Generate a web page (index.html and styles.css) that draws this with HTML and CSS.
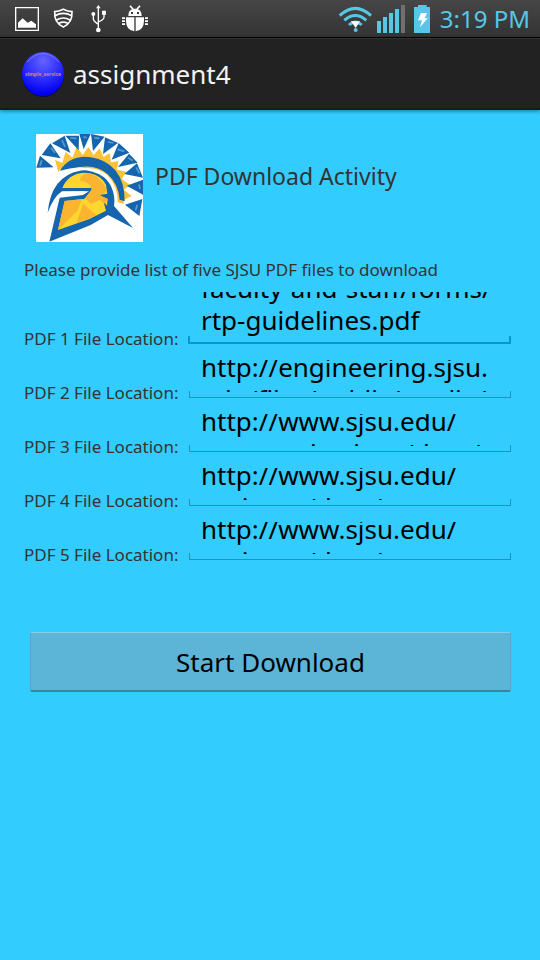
FILE: index.html
```html
<!DOCTYPE html>
<html lang="en">
<head>
<meta charset="utf-8">
<meta name="viewport" content="width=device-width, initial-scale=1">
<title>assignment4</title>
<link rel="stylesheet" href="styles.css">
</head>
<body>
<div class="status">
  <svg class="notices" viewBox="0 0 480 120" aria-hidden="true">
    <path fill="none" stroke="#fff" stroke-width="4" d="M47 23h68v68H47z"/>
    <path fill="#fff" d="M54 83V68l14-13 15 13 11-6 14 11v10z"/>
    <path fill="none" stroke="#fff" stroke-width="5" d="M164 35q12 0 26-7 14 7 26 7 2 34-26 46-28-12-26-46zM165 47q25-14 50 0M170 60q20-12 40 0M177 70q13-7 26 0"/>
    <path fill="none" stroke="#fff" stroke-width="4" d="M295 22v66M280 44v12q0 7 15 17M312 37v15q0 7-17 14"/>
    <path fill="#fff" d="M288 25l7-10 7 10zM306 32h12v12h-12z"/>
    <circle fill="#fff" cx="280" cy="42" r="6"/><circle fill="#fff" cx="295" cy="90" r="7"/>
    <path fill="#fff" d="M385 48q0-16 11-20l-8-9 4-3 9 10h8l9-10 4 3-8 9q11 4 11 20zM378 52h25v42q-25-4-25-32zM407 52h25v10q0 28-25 32zM366 52h9v5h-9zM366 61h9v5h-9zM366 70h9v5h-9zM435 52h9v5h-9zM435 61h9v5h-9zM435 70h9v5h-9z"/>
    <path fill="#3b3b3b" d="M393 36h6v6h-6zM411 36h6v6h-6z"/>
  </svg>
  <svg class="signals" viewBox="0 0 300 120" aria-hidden="true">
    <g fill="none" stroke="#56c8e6" stroke-width="9">
      <path d="M29 47Q76 3 123 47M43 61q33-29 66 0M57 75q19-18 38 0"/>
    </g>
    <circle fill="#56c8e6" cx="77" cy="90" r="6"/>
    <path fill="#fff" d="M63 64h27L77 84z"/>
    <path fill="#56c8e6" d="M141 63h12v36h-12zM159 51h12v48h-12zM177 39h12v60h-12zM195 27h12v72h-12z"/>
    <path fill="#707070" d="M213 15h12v84h-12z"/>
    <path fill="#56c8e6" d="M252 21h12v-6h26v6h13v78h-51z"/>
    <path fill="#fff" d="M273 39h18l-7 16h9l-23 27 6-21h-12z"/>
  </svg>
  <time class="clock">3:19 PM</time>
</div>
<header class="bar">
  <svg class="launcher" viewBox="0 0 44 48" aria-hidden="true">
    <defs><radialGradient id="orb" cx=".5" cy=".2" r=".75"><stop offset="0" stop-color="#6464ff"/><stop offset=".5" stop-color="#3434ff"/><stop offset="1" stop-color="#0000f0"/></radialGradient></defs>
    <ellipse cx="22" cy="25" rx="21" ry="22" fill="#080850"/>
    <ellipse cx="22" cy="24" rx="21" ry="22" fill="url(#orb)"/>
    <path d="M6 12Q22-5 38 12" fill="none" stroke="#7777f0"/>
    <text x="22" y="26" text-anchor="middle" class="orb-text">simple_service</text>
  </svg>
  <h1 class="app-name">assignment4</h1>
</header>
<main class="content">
  <div class="intro">
    <svg class="logo" viewBox="33 27 321 324" role="img" aria-label="Spartan helmet">
      <path fill="#fff" d="M33 27h321v324H33z"/>
      <path fill="#fcc23a" d="M100 142l-10-37 22 8 10-33 20 18 13-32 18 24 17-24 16 24 18-20 12 26 18-12 4 28 22-4-4 26 28 6-14 22 26 18-20 14 24 19-24 12v12l-30-10-16-50-40-40-60-14-46 12z"/>
      <g fill="#1465ad">
        <path d="M34 128l11-36 41 35zM50 90l26-35 31 45zM81 55l38-23 17 52zM121 32h41l-1 44zM163 27h34l-21 46zM198 27l41 8-35 43zM240 37l39 17-45 33zM281 54l32 29-53 21zM312 86l26 27-59 13zM336 115l18 43-56-11zM354 164v45l-49-27zM352 222l-9 51-43-34z"/>
        <path d="M105 137Q128 98 176 95 236 96 271 136 300 172 299 229L284 224Q280 176 248 148 214 118 166 126 134 129 105 137z"/>
        <path d="M68 263Q78 153 165 137 234 127 263 175 279 209 267 243L324 309 249 270 197 300 73 350 104 218 174 210 192 199 111 199Q86 215 68 263z"/>
      </g>
      <path fill="#fff" d="M146 135Q210 117 247 150 281 185 278 237L295 243 313 270 268 240Q271 187 237 157 202 131 146 135zM115 200l67-1-16 7-51 2z"/>
      <path fill="#ffd62f" d="M112 189Q129 146 177 143 224 144 243 179L247 206 223 210 248 222 246 242 235 227 243 257 193 282 99 315 119 228 178 222 204 189z"/>
      <path fill="#fbb42f" d="M166 157q24-24 50 0 26 21 29 43l-22 10 25 12-11 15-12-12-27 12-16-16 16-21q8-25-32-33zM119 228l52-6-14 36-58 57zM174 236l41 35-60 22z"/>
      <path fill="none" stroke="#5d9bd0" stroke-width="5" d="M50 106l-5 16M78 68l12 15M111 45l9 21M136 39l18 1M175 36l10 2M208 38l15 2M249 51l16 3M278 73l20 6M309 98l14 9M334 127l9 18M342 178l3 14M336 240l-4 16"/>
    </svg>
    <h2 class="title">PDF Download Activity</h2>
  </div>
  <p class="hint">Please provide list of five SJSU PDF files to download</p>
  <form class="files">
    <div class="row row-active">
      <label for="f1">PDF 1 File Location:</label>
      <div class="field"><textarea id="f1" wrap="off">http://www.sjsu.edu/
faculty-and-staff/forms/
rtp-guidelines.pdf</textarea></div>
    </div>
    <div class="row">
      <label for="f2">PDF 2 File Location:</label>
      <div class="field"><textarea id="f2" wrap="off">http://engineering.sjsu.
edu/files/public/media/</textarea></div>
    </div>
    <div class="row">
      <label for="f3">PDF 3 File Location:</label>
      <div class="field"><textarea id="f3" wrap="off">http://www.sjsu.edu/
communications/docs/</textarea></div>
    </div>
    <div class="row">
      <label for="f4">PDF 4 File Location:</label>
      <div class="field"><textarea id="f4" wrap="off">http://www.sjsu.edu/
registrar/docs/</textarea></div>
    </div>
    <div class="row">
      <label for="f5">PDF 5 File Location:</label>
      <div class="field"><textarea id="f5" wrap="off">http://www.sjsu.edu/
registrar/docs/</textarea></div>
    </div>
    <button type="button" class="start">Start Download</button>
  </form>
</main>
<script src="script.js"></script>
</body>
</html>
```
FILE: styles.css
```css
* { box-sizing: border-box; }
body {
  margin: 0;
  min-height: 100vh;
  background: #33ccff;
  color: #333;
  font-family: "Noto Sans", "Open Sans", sans-serif;
}
.status {
  display: flex;
  align-items: flex-start;
  height: 38px;
  padding-right: 10px;
  background: linear-gradient(#464646, #333);
  border-bottom: 1px solid #000;
}
.notices { width: 160px; height: 40px; }
.signals { width: 100px; height: 40px; margin-left: auto; }
.clock { margin-left: 10px; color: #56c8e6; font-size: 24px; line-height: 38px; }
.bar {
  display: flex;
  align-items: center;
  gap: 8px;
  height: 72px;
  padding: 0 21px;
  background: #222;
  border-top: 1px solid #333;
  border-bottom: 2px solid #1a1a1a;
  box-shadow: 0 1px 4px rgba(0, 0, 0, .45);
}
.launcher { width: 44px; height: 48px; }
.orb-text { font-size: 5px; font-weight: 700; fill: #d08a70; }
.app-name { margin: 0; color: #f3f3f3; font-size: 26px; font-weight: 400; line-height: 32px; }
.content { padding: 24px 24px 40px; }
.intro { display: flex; gap: 12px; padding-left: 12px; }
.logo { width: 107px; height: 108px; }
.title { margin: 24px 0 0; font-size: 23px; font-weight: 400; line-height: 36px; }
.hint { margin: 16px 0 0; font-size: 17px; line-height: 24px; }
.files { display: flex; flex-direction: column; margin-top: 8px; }
.row { display: grid; grid-template-columns: 160px 1fr; gap: 4px; align-items: end; height: 54px; }
.row label { font-size: 17px; line-height: 24px; margin-bottom: -7px; white-space: nowrap; }
.field { position: relative; padding: 0 12px 6px 13px; margin-right: 5px; }
.field::after {
  content: "";
  position: absolute;
  inset: auto 0 0 1px;
  height: 6px;
  border: 1px solid #1e94bd;
  border-top: 0;
  pointer-events: none;
}
.row-active .field::after { left: 0; border: 2px solid #0099cc; border-top: 0; }
textarea {
  display: block;
  width: 100%;
  height: 32px;
  margin: 0;
  padding: 0;
  border: 0;
  outline: 0;
  resize: none;
  overflow: hidden;
  background: transparent;
  color: #000;
  font: 26px/32px "Noto Sans", "Open Sans", sans-serif;
}
.row-active textarea { height: 46px; }
.start {
  margin: 72px 5px 0 6px;
  height: 60px;
  border: 1px solid #58a8c4;
  border-top-color: #86cde5;
  border-bottom: 2px solid #3c839e;
  border-radius: 2px;
  background: #5cb5d7;
  color: #000;
  font: 26px/32px "Noto Sans", "Open Sans", sans-serif;
}
```
FILE: script.js
```js
// Show the end of the active field and line up the first row of the others.
document.querySelectorAll("textarea").forEach(function (area) {
  area.scrollTop = area.closest(".row-active") ? area.scrollHeight : 9;
});
```
